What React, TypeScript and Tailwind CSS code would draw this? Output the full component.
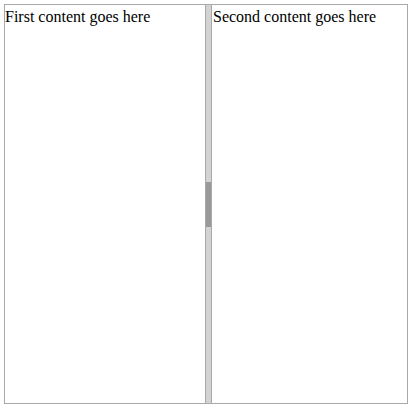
export default function App() {
  return (
    <div className="p-1 font-['Liberation_Serif',serif] text-base text-black">
      <div className="flex h-[400px] w-[404px] border border-[#a9a9a9]">
        <div className="w-[200px]">First content goes here</div>
        <div className="flex w-[7px] flex-col justify-center border-x border-[#a9a9a9] bg-[#d3d3d3]">
          <div className="h-[45px] bg-[#999]" />
        </div>
        <div className="flex-1 pl-px">Second content goes here</div>
      </div>
    </div>
  );
}
